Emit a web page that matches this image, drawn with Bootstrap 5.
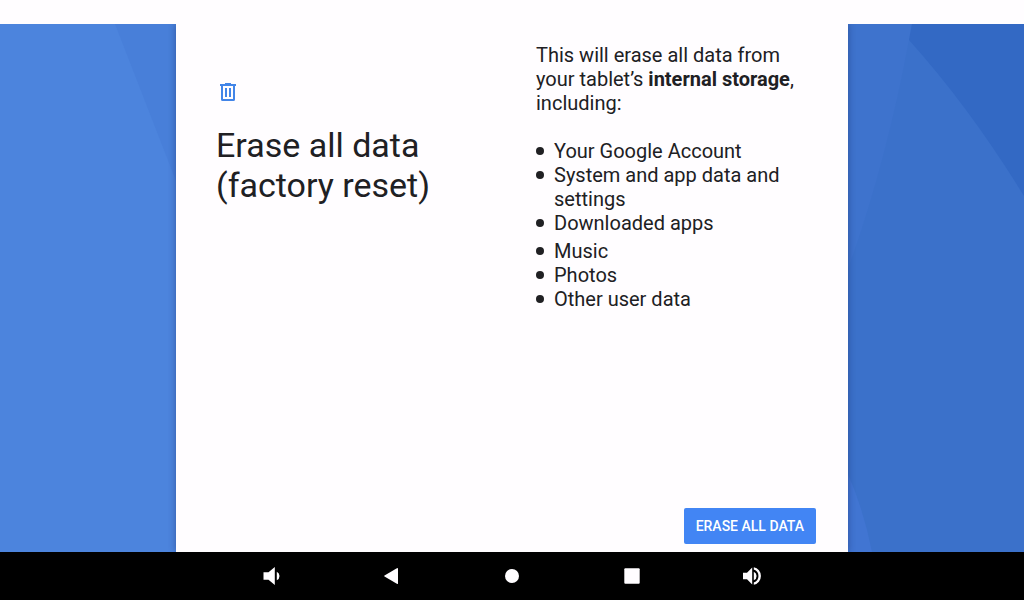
<!DOCTYPE html>
<html lang="en">
<head>
<meta charset="utf-8">
<meta name="viewport" content="width=device-width, initial-scale=1">
<title>Erase all data (factory reset)</title>
<link href="https://cdn.jsdelivr.net/npm/bootstrap@5.3.0/dist/css/bootstrap.min.css" rel="stylesheet">
<style>
  body { font-family: Roboto, sans-serif; background: #fffdff; color: #202023; }
  .status-strip { height: 24px; }
  .stage { display: grid; grid-template-columns: 11fr 42fr 11fr; }
  .backdrop { position: relative; overflow: hidden; }
  .backdrop svg { position: absolute; inset: 0; width: 100%; height: 100%; }
  .panel { background: #fffdff; box-shadow: 0 0 7px rgba(20, 35, 90, .45); z-index: 1; clip-path: inset(0 -12px); }
  .panel-title { font-size: 34px; line-height: 40px; font-weight: 400; margin-top: 21px; }
  .title-side { padding: 56px 40px 0; }
  .detail-side { padding: 19px 40px 0 24px; font-size: 20px; line-height: 24px; }
  .erase-list li { position: relative; padding-left: 18px; }
  .erase-list li::before { content: ""; position: absolute; left: 0; top: 8px; width: 8px; height: 8px; border-radius: 50%; background: #202023; }
  .btn-erase { --bs-btn-color: #fff; --bs-btn-bg: #4285f4; --bs-btn-hover-color: #fff; --bs-btn-hover-bg: #3676e0; --bs-btn-active-color: #fff; --bs-btn-active-bg: #2f6bd0;
    --bs-btn-border-width: 0; --bs-btn-border-radius: 2px; --bs-btn-font-size: 14px; --bs-btn-font-weight: 500; --bs-btn-line-height: 20px; --bs-btn-padding-x: 12px; --bs-btn-padding-y: 8px; min-width: 132px; }
  .system-nav { display: grid; grid-template-columns: repeat(5, 120px); justify-content: center; height: 48px; background: #000; }
  .system-nav button { background: none; border: 0; padding: 12px 0; line-height: 0; color: #fffdff; }
</style>
</head>
<body class="d-flex flex-column min-vh-100">
<div class="status-strip"></div>
<div class="stage flex-grow-1">
  <div class="backdrop" aria-hidden="true">
    <svg viewBox="0 0 176 528" preserveAspectRatio="none">
      <path fill="#4c84dd" d="M0 0h176v528H0z"/>
      <path fill="#487fd9" d="M115 0h61v157z"/>
    </svg>
  </div>
  <main class="panel d-flex flex-column">
    <div class="row g-0 flex-grow-1">
      <header class="col-6 title-side">
        <svg class="d-block" width="24" height="24" viewBox="0 0 24 24" fill="none" stroke="#4285e8" stroke-width="2" aria-hidden="true">
          <path d="M4 5h16M9 4h6M6 5v14.500q0 .5.5.5h11q.5 0 .5-.5V5M10 8v9M14 8v9"/>
        </svg>
        <h1 class="panel-title mb-0">Erase all data (factory reset)</h1>
      </header>
      <section class="col-6 detail-side">
        <p class="mb-4">This will erase all data from your tablet’s <strong>internal storage</strong>, including:</p>
        <ul class="erase-list list-unstyled mb-0">
          <li>Your Google Account</li>
          <li>System and app data and settings</li>
          <li>Downloaded apps</li>
          <li class="mt-1">Music</li>
          <li>Photos</li>
          <li>Other user data</li>
        </ul>
      </section>
    </div>
    <footer class="d-flex justify-content-end pb-2 px-4 me-2">
      <button type="button" class="btn btn-erase">ERASE ALL DATA</button>
    </footer>
  </main>
  <div class="backdrop" aria-hidden="true">
    <svg viewBox="0 0 176 528" preserveAspectRatio="none">
      <path fill="#3b71ca" d="M0 0h176v528H0z"/>
      <path fill="#3e73cd" d="M0 0h64L61 16Q38 140 0 245z"/>
      <path fill="#3369c4" d="M64 0h112v172Q122 84 61 16z"/>
      <path fill="#4175d2" d="M0 450Q16 487 24 528H0z"/>
    </svg>
  </div>
</div>
<nav class="system-nav" aria-label="System navigation">
  <button type="button" aria-label="Volume down"><svg width="24" height="24" viewBox="0 0 24 24" fill="currentColor"><path d="M3.500 8.300v7.400h5l6.300 5.300V3L8.500 8.300zM16.800 7.800v8.400a4.600 4.600 0 0 0 0-8.400z"/></svg></button>
  <button type="button" aria-label="Back"><svg width="24" height="24" viewBox="0 0 24 24" fill="currentColor"><path d="M18 4.500v15q0 .7-.7.4L4.500 12.500q-.7-.5 0-1L17.300 4.100q.7-.3.7.4z"/></svg></button>
  <button type="button" aria-label="Home"><svg width="24" height="24" viewBox="0 0 24 24" fill="currentColor"><circle cx="12" cy="12" r="7"/></svg></button>
  <button type="button" aria-label="Overview"><svg width="24" height="24" viewBox="0 0 24 24" fill="currentColor"><rect x="4.300" y="4.300" width="15.400" height="15.400" rx="1"/></svg></button>
  <button type="button" aria-label="Volume up"><svg width="24" height="24" viewBox="0 0 24 24" fill="currentColor"><path d="M3 8.800v6.400h4l5.200 5.300v-17L7 8.800zM13.800 7.700v8.600a4.700 4.700 0 0 0 0-8.600zM13.800 3.200v2.200a7 7 0 0 1 0 13.200v2.200a9 9 0 0 0 0-17.600z"/></svg></button>
</nav>
<script src="https://cdn.jsdelivr.net/npm/bootstrap@5.3.0/dist/js/bootstrap.bundle.min.js"></script>
</body>
</html>
